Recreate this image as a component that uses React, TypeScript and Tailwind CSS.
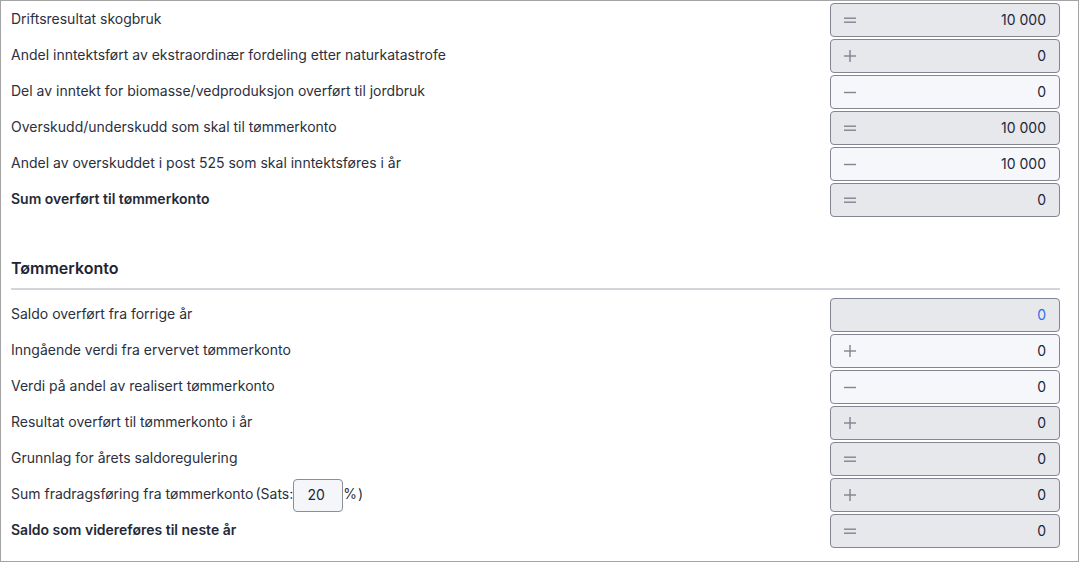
import React from 'react';

type Op = '=' | '+' | '-' | null;

type Row = {
  label: string;
  value: string;
  op: Op;
  readOnly?: boolean;
  bold?: boolean;
  blue?: boolean;
  sats?: boolean;
};

const driftRows: Row[] = [
  { label: 'Driftsresultat skogbruk', value: '10 000', op: '=', readOnly: true },
  { label: 'Andel inntektsført av ekstraordinær fordeling etter naturkatastrofe', value: '0', op: '+', readOnly: true },
  { label: 'Del av inntekt for biomasse/vedproduksjon overført til jordbruk', value: '0', op: '-' },
  { label: 'Overskudd/underskudd som skal til tømmerkonto', value: '10 000', op: '=', readOnly: true },
  { label: 'Andel av overskuddet i post 525 som skal inntektsføres i år', value: '10 000', op: '-' },
  { label: 'Sum overført til tømmerkonto', value: '0', op: '=', readOnly: true, bold: true },
];

const kontoRows: Row[] = [
  { label: 'Saldo overført fra forrige år', value: '0', op: null, readOnly: true, blue: true },
  { label: 'Inngående verdi fra ervervet tømmerkonto', value: '0', op: '+' },
  { label: 'Verdi på andel av realisert tømmerkonto', value: '0', op: '-' },
  { label: 'Resultat overført til tømmerkonto i år', value: '0', op: '+', readOnly: true },
  { label: 'Grunnlag for årets saldoregulering', value: '0', op: '=', readOnly: true },
  { label: 'Sum fradragsføring fra tømmerkonto', value: '0', op: '+', readOnly: true, sats: true },
  { label: 'Saldo som videreføres til neste år', value: '0', op: '=', readOnly: true, bold: true },
];

function OpIcon({ op }: { op: Op }) {
  if (!op) return <span className="w-3" />;
  return (
    <svg width="12" height="12" viewBox="0 0 12 12" className="mt-[2px] text-[#80848f]" fill="none" stroke="currentColor" strokeWidth="1.4">
      {op === '=' && (
        <>
          <line x1="0" y1="4.2" x2="12" y2="4.2" />
          <line x1="0" y1="8.2" x2="12" y2="8.2" />
        </>
      )}
      {op === '+' && (
        <>
          <line x1="0" y1="6" x2="12" y2="6" />
          <line x1="6" y1="0" x2="6" y2="12" />
        </>
      )}
      {op === '-' && <line x1="0" y1="6.5" x2="12" y2="6.5" />}
    </svg>
  );
}

function FieldRow({ row }: { row: Row }) {
  return (
    <div className="flex h-9 items-center justify-between">
      <div className={`flex items-center text-[14px] text-[#2c303d] ${row.bold ? 'font-semibold text-[#252937]' : ''}`}>
        <span className="pb-1">{row.label}</span>
        {row.sats && (
          <>
            <span className="ml-[2px] pb-1">(Sats:</span>
            <div className="flex h-[33px] w-[50px] items-center justify-center rounded-[4px] border border-[#8a8e9a] bg-[#f5f6fa] pb-[2px] pr-1 text-[#22263a]">
              20
            </div>
            <span className="pb-1">%</span>
            <span className="ml-[1px] pb-1">)</span>
          </>
        )}
      </div>
      <div
        className={`flex h-[34px] w-[230px] items-center justify-between rounded-[4px] border border-[#828693] pb-[2px] pl-[13px] pr-[13px] text-[14px] ${
          row.readOnly ? 'bg-[#e7e8ec]' : 'bg-[#f6f7fb]'
        }`}
      >
        <OpIcon op={row.op} />
        <span className={row.blue ? 'text-[#2f6bf2]' : 'text-[#22263a]'}>{row.value}</span>
      </div>
    </div>
  );
}

export default function App() {
  return (
    <div
      className="h-[562px] w-[1079px] border border-[#a4a4a4] bg-white pl-[10px] pr-[18px] pt-[1px]"
      style={{ fontFamily: 'Inter, "Noto Sans", sans-serif' }}
    >
      {driftRows.map((row, i) => (
        <FieldRow key={i} row={row} />
      ))}

      {/* Tømmerkonto */}
      <h3 className="mt-[38px] flex h-6 items-center text-[16px] font-semibold text-[#1f2436]">Tømmerkonto</h3>
      <div className="mb-[7px] mt-2 h-[2px] bg-[#d4d5db]" />

      {kontoRows.map((row, i) => (
        <FieldRow key={i} row={row} />
      ))}
    </div>
  );
}
